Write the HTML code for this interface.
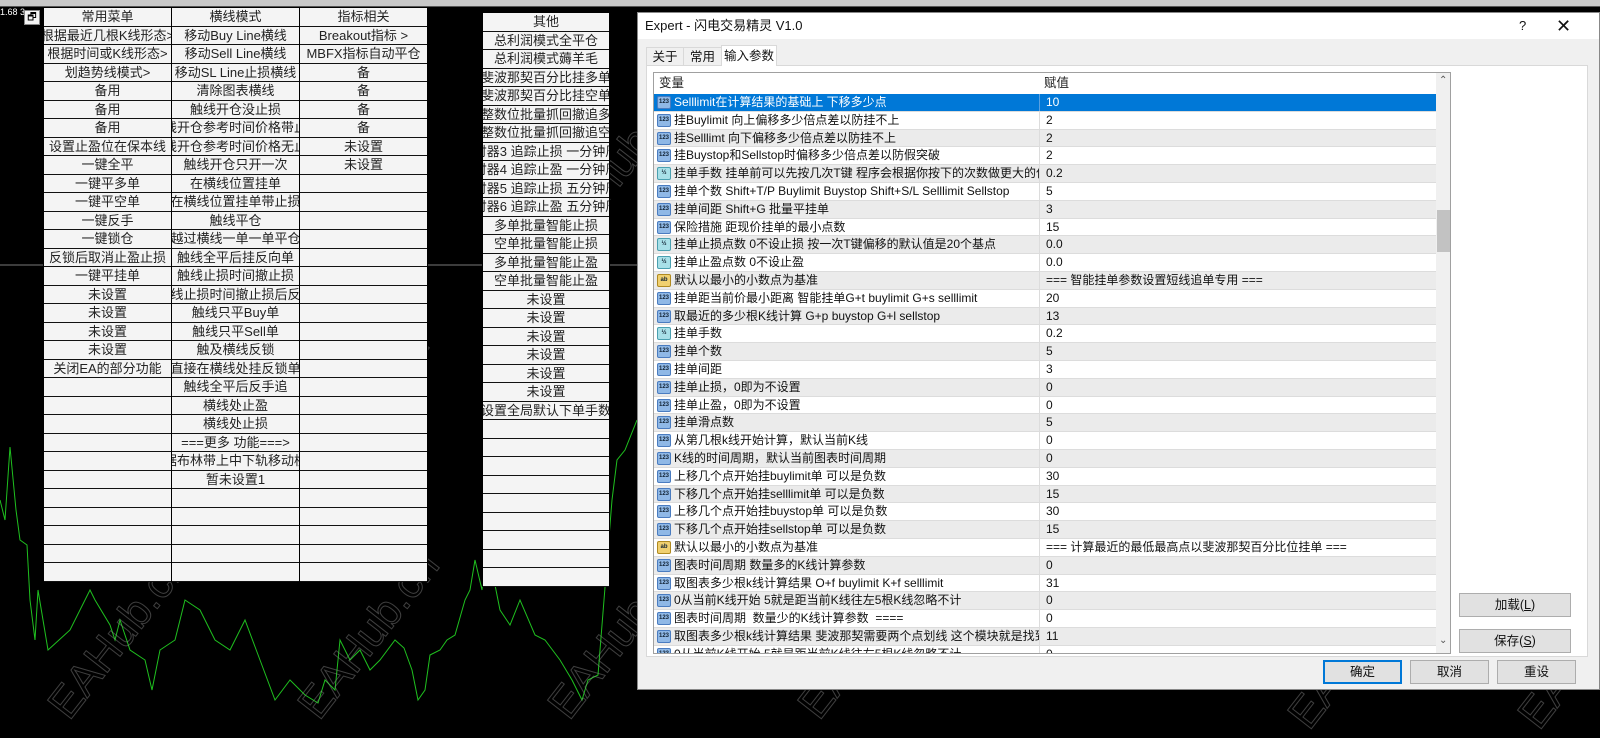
<!DOCTYPE html>
<html><head><meta charset="utf-8">
<style>
*{box-sizing:border-box;margin:0;padding:0}
body{width:1600px;height:717px;background:#000;position:relative;overflow:hidden;font-family:"Liberation Sans","Noto Sans CJK SC",sans-serif;}
.topbar{position:absolute;left:0;top:0;width:1600px;height:7px;background:#c8c8c8;border-bottom:1px solid #555}
.col{position:absolute;display:flex;flex-direction:column;border-left:1px solid #000;border-right:1px solid #000}
.col div{height:18.5px;background:#f4f4f4;border-bottom:1.5px solid #111;font-size:13px;color:#222;display:flex;justify-content:center;align-items:center;white-space:nowrap;overflow:hidden;line-height:17px}
.dlg{position:absolute;left:637px;top:12px;width:963px;height:678px;background:#f0f0f0;border:1px solid #888}
.title{position:absolute;left:0;top:0;width:100%;height:26px;background:#fff;font-size:13px;color:#111;padding:0 0 0 7px;line-height:26px;white-space:nowrap}
.title .q{position:absolute;left:881px;top:0;font-size:13px}
.title .x{position:absolute;left:918px;top:0;font-size:18px;font-weight:300}
.tab{position:absolute;top:34px;height:19px;font-size:12.5px;color:#111;line-height:18px;text-align:center;white-space:nowrap;border:1px solid #d9d9d9;border-bottom:none;background:#f0f0f0}
.panel{position:absolute;left:8px;top:52px;width:942px;height:592px;background:#fff;border:1px solid #d9d9d9}
.grid{position:absolute;left:15px;top:59px;width:798px;height:582px;background:#fff;border:1px solid #a0a0a0;overflow:hidden}
.hdr{height:21px;font-size:12.5px;color:#222;position:relative;background:#fff;line-height:20px}
.hdr span{position:absolute;top:0}
.r{height:17.8px;position:relative;font-size:12px;color:#111;border-bottom:1px solid #dcdcdc;white-space:nowrap;line-height:16px}
.r:nth-child(odd){background:#ebebeb}
.r.sel{background:#0078d7;color:#fff}
.r .ic{position:absolute;left:3px;top:2px;width:14px;height:13px;border-radius:2px;background:#8fb8e6;border:1px solid #4a7cc0;font-size:6px;color:#123;text-align:center;line-height:11px;font-weight:bold}
.r .ic.h{background:#a8e0e8;border-color:#4aa0b0}
.r .ic.ab{background:#f0d070;border-color:#b08a20}
.r .n{position:absolute;left:20px;top:0;width:365px;overflow:hidden;height:17px}
.r .v{position:absolute;left:385px;top:0;border-left:1px solid #dcdcdc;padding-left:6px;height:17px;width:395px;overflow:hidden}
.sb{position:absolute;left:782px;top:0;width:15px;height:580px;background:#f0f0f0}
.thumb{position:absolute;left:1px;top:137px;width:13px;height:42px;background:#c2c2c2}
.btn{position:absolute;height:24px;background:#e1e1e1;border:1px solid #adadad;font-size:12.5px;color:#111;text-align:center;line-height:22px;white-space:nowrap}
.wm{position:absolute;font-size:44px;font-family:"Liberation Sans",sans-serif;color:transparent;-webkit-text-stroke:1px rgba(140,140,140,.45);transform:rotate(-52deg);white-space:nowrap}
</style></head><body>
<div class="topbar"></div>
<div style="position:absolute;left:0;top:7px;color:#fff;font-size:9px">1.68 3</div>
<svg style="position:absolute;left:0;top:0" width="1600" height="717">
<line x1="0" y1="265" x2="1600" y2="265" stroke="#777" stroke-width="1"/>
<polyline fill="none" stroke="#1fc01f" stroke-width="1" points="0,500 5,520 10,447 16,510 20,540 27,545 30,600 35,640 38,590 43,620 48,650 70,630 90,590 95,600 110,625 115,640 120,620 130,650 145,660 152,690 160,650 175,640 185,600 200,610 215,640 230,650 245,620 260,660 275,700 290,680 305,695 318,703 325,680 335,690 340,640 350,660 360,650 370,670 380,660 395,640 404,648 412,670 418,700 425,690 430,655 440,650 447,640 455,635 465,600 470,590 475,560 482,590 485,550 490,560 500,610 510,625 520,600 535,635 545,640 560,660 572,680 582,700 588,680 598,675 604,600 612,500 617,460 625,450 637,420"/>
</svg>
<div class="wm" style="left:20px;top:120px">EAHub.cn</div>
<div class="wm" style="left:250px;top:120px">EAHub.cn</div>
<div class="wm" style="left:20px;top:380px">EAHub.cn</div>
<div class="wm" style="left:260px;top:390px">EAHub.cn</div>
<div class="wm" style="left:20px;top:610px">EAHub.cn</div>
<div class="wm" style="left:270px;top:610px">EAHub.cn</div>
<div class="wm" style="left:520px;top:140px">EAHub.cn</div>
<div class="wm" style="left:760px;top:120px">EAHub.cn</div>
<div class="wm" style="left:1010px;top:130px">EAHub.cn</div>
<div class="wm" style="left:1260px;top:130px">EAHub.cn</div>
<div class="wm" style="left:1490px;top:130px">EAHub.cn</div>
<div class="wm" style="left:770px;top:380px">EAHub.cn</div>
<div class="wm" style="left:1010px;top:380px">EAHub.cn</div>
<div class="wm" style="left:1260px;top:380px">EAHub.cn</div>
<div class="wm" style="left:1490px;top:390px">EAHub.cn</div>
<div class="wm" style="left:520px;top:610px">EAHub.cn</div>
<div class="wm" style="left:770px;top:610px">EAHub.cn</div>
<div class="wm" style="left:1260px;top:620px">EAHub.cn</div>
<div class="wm" style="left:1490px;top:620px">EAHub.cn</div>
<div style="position:absolute;left:24px;top:10px;width:16px;height:15px;background:#f4f4f4;border:1px solid #888;font-size:10px;text-align:center;line-height:13px">🗗</div>

<div class="col" style="left:43px;top:8px;width:129px">
<div>常用菜单</div><div>根据最近几根K线形态&gt;</div><div>根据时间或K线形态&gt;</div><div>划趋势线模式&gt;</div><div>备用</div><div>备用</div><div>备用</div><div>设置止盈位在保本线</div><div>一键全平</div><div>一键平多单</div><div>一键平空单</div><div>一键反手</div><div>一键锁仓</div><div>反锁后取消止盈止损</div><div>一键平挂单</div><div>未设置</div><div>未设置</div><div>未设置</div><div>未设置</div><div>关闭EA的部分功能</div><div></div><div></div><div></div><div></div><div></div><div></div><div></div><div></div><div></div><div></div><div></div>
</div>
<div class="col" style="left:171px;top:8px;width:129px">
<div>横线模式</div><div>移动Buy Line横线</div><div>移动Sell Line横线</div><div>移动SL Line止损横线</div><div>清除图表横线</div><div>触线开仓没止损</div><div>触线开仓参考时间价格带止损</div><div>触线开仓参考时间价格无止损</div><div>触线开仓只开一次</div><div>在横线位置挂单</div><div>在横线位置挂单带止损</div><div>触线平仓</div><div>越过横线一单一单平仓</div><div>触线全平后挂反向单</div><div>触线止损时间撤止损</div><div>触线止损时间撤止损后反手</div><div>触线只平Buy单</div><div>触线只平Sell单</div><div>触及横线反锁</div><div>直接在横线处挂反锁单</div><div>触线全平后反手追</div><div>横线处止盈</div><div>横线处止损</div><div>===更多 功能===&gt;</div><div>根据布林带上中下轨移动横线</div><div>暂未设置1</div><div></div><div></div><div></div><div></div><div></div>
</div>
<div class="col" style="left:299px;top:8px;width:129px">
<div>指标相关</div><div>Breakout指标 &gt;</div><div>MBFX指标自动平仓</div><div>备</div><div>备</div><div>备</div><div>备</div><div>未设置</div><div>未设置</div><div></div><div></div><div></div><div></div><div></div><div></div><div></div><div></div><div></div><div></div><div></div><div></div><div></div><div></div><div></div><div></div><div></div><div></div><div></div><div></div><div></div><div></div>
</div>
<div class="col" style="left:482px;top:13px;width:128px">
<div>其他</div><div>总利润模式全平仓</div><div>总利润模式薅羊毛</div><div>斐波那契百分比挂多单</div><div>斐波那契百分比挂空单</div><div>整数位批量抓回撤追多</div><div>整数位批量抓回撤追空</div><div>计时器3 追踪止损 一分钟周期</div><div>计时器4 追踪止盈 一分钟周期</div><div>计时器5 追踪止损 五分钟周期</div><div>计时器6 追踪止盈 五分钟周期</div><div>多单批量智能止损</div><div>空单批量智能止损</div><div>多单批量智能止盈</div><div>空单批量智能止盈</div><div>未设置</div><div>未设置</div><div>未设置</div><div>未设置</div><div>未设置</div><div>未设置</div><div>设置全局默认下单手数</div><div></div><div></div><div></div><div></div><div></div><div></div><div></div><div></div><div></div>
</div>
<div style="position:absolute;left:1586px;top:10px;color:#fff;font-size:12px;white-space:nowrap">交易</div>

<div class="dlg">
<div class="title">Expert - 闪电交易精灵 V1.0<span class="q">?</span><span class="x">✕</span></div>
<div class="tab" style="left:8px;width:38px">关于</div>
<div class="tab" style="left:45px;width:39px">常用</div>
<div class="tab" style="left:83px;top:32px;height:21px;width:56px;background:#fff;z-index:2;line-height:20px">输入参数</div>
<div class="panel"></div>
<div class="grid">
<div class="hdr"><span style="left:5px">变量</span><span style="left:390px">赋值</span></div>
<div>
<div class="r sel"><span class="ic">123</span><span class="n">Selllimit在计算结果的基础上 下移多少点</span><span class="v" style="border-color:#5aa0e0">10</span></div>
<div class="r"><span class="ic">123</span><span class="n">挂Buylimit 向上偏移多少倍点差以防挂不上</span><span class="v">2</span></div>
<div class="r"><span class="ic">123</span><span class="n">挂Selllimt 向下偏移多少倍点差以防挂不上</span><span class="v">2</span></div>
<div class="r"><span class="ic">123</span><span class="n">挂Buystop和Sellstop时偏移多少倍点差以防假突破</span><span class="v">2</span></div>
<div class="r"><span class="ic h">½</span><span class="n">挂单手数 挂单前可以先按几次T键 程序会根据你按下的次数做更大的偏移</span><span class="v">0.2</span></div>
<div class="r"><span class="ic">123</span><span class="n">挂单个数 Shift+T/P Buylimit Buystop Shift+S/L Selllimit Sellstop</span><span class="v">5</span></div>
<div class="r"><span class="ic">123</span><span class="n">挂单间距 Shift+G 批量平挂单</span><span class="v">3</span></div>
<div class="r"><span class="ic">123</span><span class="n">保险措施 距现价挂单的最小点数</span><span class="v">15</span></div>
<div class="r"><span class="ic h">½</span><span class="n">挂单止损点数 0不设止损 按一次T键偏移的默认值是20个基点</span><span class="v">0.0</span></div>
<div class="r"><span class="ic h">½</span><span class="n">挂单止盈点数 0不设止盈</span><span class="v">0.0</span></div>
<div class="r"><span class="ic ab">ab</span><span class="n">默认以最小的小数点为基准</span><span class="v">=== 智能挂单参数设置短线追单专用 ===</span></div>
<div class="r"><span class="ic">123</span><span class="n">挂单距当前价最小距离 智能挂单G+t buylimit G+s selllimit</span><span class="v">20</span></div>
<div class="r"><span class="ic">123</span><span class="n">取最近的多少根K线计算 G+p buystop G+l sellstop</span><span class="v">13</span></div>
<div class="r"><span class="ic h">½</span><span class="n">挂单手数</span><span class="v">0.2</span></div>
<div class="r"><span class="ic">123</span><span class="n">挂单个数</span><span class="v">5</span></div>
<div class="r"><span class="ic">123</span><span class="n">挂单间距</span><span class="v">3</span></div>
<div class="r"><span class="ic">123</span><span class="n">挂单止损，0即为不设置</span><span class="v">0</span></div>
<div class="r"><span class="ic">123</span><span class="n">挂单止盈，0即为不设置</span><span class="v">0</span></div>
<div class="r"><span class="ic">123</span><span class="n">挂单滑点数</span><span class="v">5</span></div>
<div class="r"><span class="ic">123</span><span class="n">从第几根k线开始计算，默认当前K线</span><span class="v">0</span></div>
<div class="r"><span class="ic">123</span><span class="n">K线的时间周期，默认当前图表时间周期</span><span class="v">0</span></div>
<div class="r"><span class="ic">123</span><span class="n">上移几个点开始挂buylimit单 可以是负数</span><span class="v">30</span></div>
<div class="r"><span class="ic">123</span><span class="n">下移几个点开始挂selllimit单 可以是负数</span><span class="v">15</span></div>
<div class="r"><span class="ic">123</span><span class="n">上移几个点开始挂buystop单 可以是负数</span><span class="v">30</span></div>
<div class="r"><span class="ic">123</span><span class="n">下移几个点开始挂sellstop单 可以是负数</span><span class="v">15</span></div>
<div class="r"><span class="ic ab">ab</span><span class="n">默认以最小的小数点为基准</span><span class="v">=== 计算最近的最低最高点以斐波那契百分比位挂单 ===</span></div>
<div class="r"><span class="ic">123</span><span class="n">图表时间周期 数量多的K线计算参数</span><span class="v">0</span></div>
<div class="r"><span class="ic">123</span><span class="n">取图表多少根k线计算结果 O+f buylimit K+f selllimit</span><span class="v">31</span></div>
<div class="r"><span class="ic">123</span><span class="n">0从当前K线开始 5就是距当前K线往左5根K线忽略不计</span><span class="v">0</span></div>
<div class="r"><span class="ic">123</span><span class="n">图表时间周期&nbsp; 数量少的K线计算参数&nbsp; ====</span><span class="v">0</span></div>
<div class="r"><span class="ic">123</span><span class="n">取图表多少根k线计算结果 斐波那契需要两个点划线 这个模块就是找到这两?..</span><span class="v">11</span></div>
<div class="r"><span class="ic">123</span><span class="n">0从当前K线开始 5就是距当前K线往左5根K线忽略不计</span><span class="v">0</span></div>
</div>
<div class="sb"><div style="position:absolute;left:3px;top:2px;font-size:10px;color:#555">⌃</div><div class="thumb"></div><div style="position:absolute;left:3px;top:562px;font-size:10px;color:#555">⌄</div></div>
</div>
<div class="btn" style="left:821px;top:580px;width:112px">加载(<u>L</u>)</div>
<div class="btn" style="left:821px;top:616px;width:112px">保存(<u>S</u>)</div>
<div class="btn" style="left:685px;top:647px;width:79px;border:2px solid #0078d7;line-height:20px">确定</div>
<div class="btn" style="left:772px;top:647px;width:79px">取消</div>
<div class="btn" style="left:859px;top:647px;width:79px">重设</div>
</div>
</body></html>
